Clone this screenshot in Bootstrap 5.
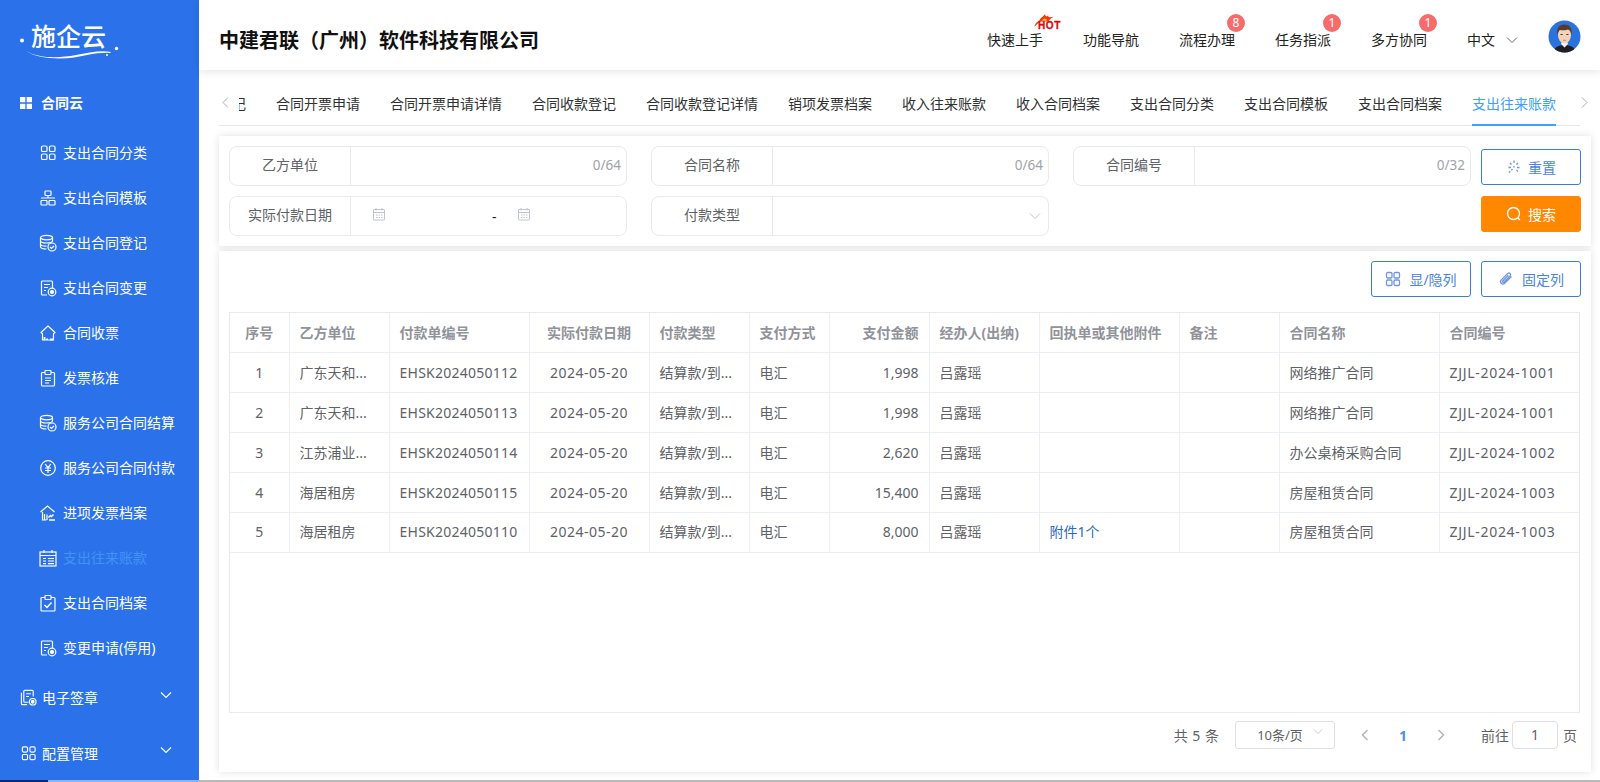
<!DOCTYPE html>
<html lang="zh-CN">
<head>
<meta charset="utf-8">
<title>支出往来账款</title>
<link href="https://cdn.jsdelivr.net/npm/bootstrap@5.3.0/dist/css/bootstrap.min.css" rel="stylesheet">
<style>
html,body{height:782px;overflow:hidden}
body{font-family:"Noto Sans","Noto Sans CJK SC",sans-serif;font-size:14px;color:#606266;background:#fff}
.app-shell{height:780px}
.side{width:199px;flex:none;background:#2b72ea;color:#fff}
.logo-box{height:80px;position:relative}
.logo-txt{position:absolute;left:31px;top:16px;font-size:25px;line-height:40px;font-weight:500;color:#fff}
.logo-art{position:absolute;left:0;top:0}
.side-head{height:45px;padding-left:20px;gap:9px;font-weight:700;color:#fff}
.side-list{margin-top:5px}
.side .nav-link{height:45px;padding:0 0 0 39px;gap:6px;color:#fff;display:flex;align-items:center;line-height:1}
.side .nav-link.is-on{color:#4193f5}
.side-group{height:56px;padding:0 27px 0 20px;gap:5px;color:#fff}
.side-group-first{height:55px}
.side-group .chev{margin-top:-6px}
.ico{width:18px;height:18px;flex:none;fill:none;stroke:#fff;stroke-width:1.2}
.ico-h{width:17px;height:17px}
.ico-sq{width:12px;height:12px}
.main-col{min-width:0}
.top-bar{height:70px;padding:0 19px 0 20px;box-shadow:0 2px 8px rgba(0,0,0,.1);position:relative;z-index:2}
.co-name{font-size:20px;font-weight:700;color:#111;line-height:1;margin-top:11px}
.top-item{position:relative;color:#222;line-height:1;margin-top:10px;margin-right:40px}
.top-item-last{margin-right:0}
.top-badge{position:absolute;left:48px;top:-19px;width:18px;height:18px;line-height:18px;text-align:center;border-radius:50%;background:#f56c6c;color:#fff;font-size:12px}
.hot-wrap{position:absolute;left:46px;top:-19px;width:26px;height:18px}
.hot-txt{position:absolute;left:5px;top:7px;font-size:10px;line-height:10px;font-weight:700;font-family:"Liberation Sans",sans-serif;color:#d80b0b;letter-spacing:.6px;-webkit-text-stroke:.3px #d80b0b}
.avatar-svg{width:33px;height:33px;margin-left:30px;margin-top:2px;flex:none}
.lang-chev{margin-left:11px;margin-top:10px}
.content-pad{padding:0 9px 0 20px}
.tab-row{height:56px;margin-right:11px;border-bottom:1px solid #e4e7ed;position:relative}
.tab-clip{position:absolute;left:20px;right:22px;top:0;bottom:-1px;overflow:hidden}
.tab-track{margin-left:-92px;white-space:nowrap;height:100%}
.tab-one{padding:0 15px;height:100%;color:#303133;line-height:1;padding-top:27px;flex:none}
.tab-one.is-on{color:#409eff;position:relative}
.tab-one.is-on::after{content:"";position:absolute;left:15px;right:15px;bottom:0;height:2px;background:#409eff}
.tab-arrow{position:absolute;top:27px}
.panel{box-shadow:0 0 8px rgba(0,0,0,.12);background:#fff}
.filter-panel{margin-top:10px;height:110px;padding:10px;gap:10px}
.filter-grid{display:grid;grid-template-columns:repeat(3,398px);grid-auto-rows:40px;column-gap:24px;row-gap:10px}
.fld{border:1px solid #e8eaed;border-radius:8px;background:#fff;height:40px}
.fld-lab{width:121px;flex:none;text-align:center;line-height:26px;height:38px;padding-top:5px;border-right:1px solid #e8eaed;margin-bottom:1px;color:#606266}
.fld-in{flex:1;min-width:0;border:0;outline:0;padding:0 6px;background:transparent;box-shadow:none}
.fld-count{font-size:13.5px;color:#a0a3a8;padding-right:5px;margin-top:-2px}
.date-box{padding-left:21px}
.date-ico{margin-top:-4px}
.date-dash{margin-left:106px;width:25px;color:#222}
.sel-box{padding-right:7px}
.btn-stack{width:100px;padding-top:3px;gap:11px}
.act-btn{height:36px;width:100px;padding:0;font-size:14px;border-radius:3px;border:1px solid #3a80d2;color:#4a86d8;background:#fff;gap:6px}
.act-btn:hover{color:#4a86d8;background:#fff;border-color:#3a80d2}
.act-wide{gap:8px}
.act-fill,.act-fill:hover{background:#ff8800;border-color:#ff8800;color:#fff}
.act-ico{width:16px;height:16px;fill:none;stroke:#6f96e0;stroke-width:1.3;flex:none}
.act-fill .act-ico{stroke:#fff}
.list-panel{margin-top:5px;height:521px;padding:10px 10px 0}
.tool-row{gap:10px}
.grid-wrap{margin-top:15px;height:401px;width:1351px;border:1px solid #e6e9ef}
.data-grid{table-layout:fixed;width:1349px;margin:0;--bs-table-border-color:#ebeef5;--bs-table-color:#606266;--bs-table-bg:#fff}
.data-grid th,.data-grid td{height:39.9px;padding:0 10px;vertical-align:middle;white-space:nowrap;overflow:hidden;font-size:14px;line-height:1}
.data-grid th{color:#909399;font-weight:700}
.data-grid tr>:first-child{border-left-width:0}
.data-grid tr>:last-child{border-right-width:0}
.data-grid thead tr{border-top-width:0}
.data-grid .t-bill{letter-spacing:.25px}
.data-grid .t-date{letter-spacing:.5px}
.data-grid .t-code{letter-spacing:.7px}
.file-link{color:#2c68c5;text-decoration:none}
.pager-row{height:44px;padding-right:4px;color:#606266}
.pg-total{word-spacing:1px}
.pg-size{width:100px;height:28px;border:1px solid #dcdfe6;border-radius:3px;margin-left:16px;position:relative;font-size:13px;text-align:center;line-height:26px;padding-right:10px}
.pg-size svg{position:absolute;right:11px;top:6px}
.pg-cur{color:#4a90e8;font-weight:700;width:16px;text-align:center;margin:0 26px}
.pg-prev{margin-left:26px}
.pg-next{margin-right:36px}
.pg-in{width:46px;height:28px;border:1px solid #dcdfe6;border-radius:4px;text-align:center;line-height:26px;margin:0 5px 0 3px}
.base-strip{height:2px;background:#b9b9b9}
.base-a{width:48px;background:#0b2a74}
.base-b{width:151px;background:#8db4f2}
</style>
</head>
<body>
<svg width="0" height="0" class="position-absolute">
<defs>
<symbol id="i-grid" viewBox="0 0 18 18"><rect x="2.500" y="2" width="5.500" height="5.500" rx="1.300"/><rect x="10.500" y="2" width="5.500" height="5.500" rx="1.300"/><rect x="2.500" y="10" width="5.500" height="5.500" rx="1.300"/><rect x="10.500" y="10" width="5.500" height="5.500" rx="1.300"/></symbol>
<symbol id="i-org" viewBox="0 0 18 18"><rect x="6" y="2" width="6" height="4.500" rx=".7"/><rect x="2" y="11.500" width="6" height="4.500" rx=".7"/><rect x="10" y="11.500" width="6" height="4.500" rx=".7"/><path d="M9 6.500V9M2 9h14"/></symbol>
<symbol id="i-db" viewBox="0 0 18 18"><ellipse cx="7.500" cy="3.600" rx="6" ry="2.200"/><path d="M1.500 3.600v9.200c0 1.200 2.700 2.200 6 2.200M1.500 6.800c0 1.200 2.700 2.200 6 2.200s6-1 6-2.200V3.600M1.500 10c0 1.200 2.700 2.200 6 2.200"/><circle cx="13" cy="13" r="4"/><path d="M11 13l1.500 1.500 2.500-2.500"/></symbol>
<symbol id="i-doc" viewBox="0 0 18 18"><path d="M8 16H3.500a1 1 0 0 1-1-1V3a1 1 0 0 1 1-1h9a1 1 0 0 1 1 1v6"/><path d="M5 5.500h6M5 8.500h4M5 11.500h2"/><circle cx="13" cy="13" r="3.800"/><circle cx="13" cy="13" r="1.500" fill="#fff"/></symbol>
<symbol id="i-doc2" viewBox="0 0 18 18"><path d="M1.500 4v11.500a1 1 0 0 0 1 1h5"/><path d="M9 14H5a1 1 0 0 1-1-1V2.500a1 1 0 0 1 1-1h8a1 1 0 0 1 1 1V8"/><path d="M6.500 5h5M6.500 8h3"/><circle cx="13.500" cy="13.500" r="3.500"/><circle cx="13.500" cy="13.500" r="1.400" fill="#fff"/></symbol>
<symbol id="i-house" viewBox="0 0 18 18"><path d="M2 8.500L9 2l7 6.500-1.500 1.200V16H3.500V9.700z" stroke-linejoin="round"/><path d="M5.500 16v-3M8 16v-1.500M11 15.500h3" stroke-width="1.800"/></symbol>
<symbol id="i-clip" viewBox="0 0 18 18"><path d="M6 3.500H3.500a1 1 0 0 0-1 1V16a1 1 0 0 0 1 1h11a1 1 0 0 0 1-1V4.500a1 1 0 0 0-1-1H12"/><rect x="6" y="1.500" width="6" height="4" rx=".8"/><path d="M6 9h6M6 11.500h6M6 14h4"/></symbol>
<symbol id="i-clipc" viewBox="0 0 18 18"><path d="M6 3.500H3a1 1 0 0 0-1 1V16a1 1 0 0 0 1 1h12a1 1 0 0 0 1-1V4.500a1 1 0 0 0-1-1h-3"/><rect x="6" y="1.500" width="6" height="4" rx=".8"/><path d="M5.500 11l2.500 2.500 4.500-5" stroke-width="1.500"/></symbol>
<symbol id="i-yen" viewBox="0 0 18 18"><circle cx="9" cy="9" r="7.300"/><path d="M6.200 5L9 8.700 11.800 5M6 9h6M6 11.500h6M9 8.700V14"/></symbol>
<symbol id="i-home2" viewBox="0 0 18 18"><path d="M1.500 8L8.500 2l7 6"/><path d="M3.500 8v8h4M5.500 10v6M8 10.500v5.500"/><path d="M9.500 13.500l2-2 1 1 2-2M10 16h6" stroke-width="1.500"/></symbol>
<symbol id="i-cal" viewBox="0 0 18 18"><rect x="1" y="3" width="16" height="14"/><path d="M5 1v3M13 1v3M1 6.500h16M4 9.500h3M9 9.500h6M4 12h3M9 12h6M4 14.700h3M9 14.700h6"/></symbol>
<symbol id="i-down" viewBox="0 0 12 8"><path d="M1 1.500l5 5 5-5" fill="none"/></symbol>
<symbol id="i-cald" viewBox="0 0 14 14"><rect x="1.500" y="2.500" width="11" height="10.500" rx=".5"/><path d="M4 1v2.500M10 1v2.500M1.500 5.500h11M4 8h1.500M6.500 8H8M9 8h1.500M4 10.500h1.500M6.500 10.500H8M9 10.500h1.500"/></symbol>
</defs>
</svg>

<div class="d-flex app-shell">
  <aside class="side">
    <div class="logo-box">
      <svg class="logo-art" width="130" height="70" viewBox="0 0 130 70" aria-hidden="true">
        <circle cx="22" cy="40.500" r="2" fill="#fff"/>
        <circle cx="116.500" cy="48.500" r="1.700" fill="#fff"/>
        <circle cx="107" cy="55" r="1" fill="#fff"/>
        <path d="M26 51c14 8 34 7 50 4 12-2 24-5 35-3l-1 1c-13-1-24 3-36 4.500-16 2-37 1-48-6.500z" fill="#fff"/>
      </svg>
      <div class="logo-txt">施企云</div>
    </div>
    <div class="side-head d-flex align-items-center">
      <svg class="ico ico-sq" viewBox="0 0 18 18"><path d="M0 0h8v8H0zM10 0h8v8h-8zM0 10h8v8H0zM10 10h8v8h-8z" fill="#fff" stroke="none"/></svg>
      <span>合同云</span>
    </div>
    <nav class="nav flex-column side-list">
      <a class="nav-link" href="#"><svg class="ico"><use href="#i-grid"/></svg>支出合同分类</a>
      <a class="nav-link" href="#"><svg class="ico"><use href="#i-org"/></svg>支出合同模板</a>
      <a class="nav-link" href="#"><svg class="ico"><use href="#i-db"/></svg>支出合同登记</a>
      <a class="nav-link" href="#"><svg class="ico"><use href="#i-doc"/></svg>支出合同变更</a>
      <a class="nav-link" href="#"><svg class="ico"><use href="#i-house"/></svg>合同收票</a>
      <a class="nav-link" href="#"><svg class="ico"><use href="#i-clip"/></svg>发票核准</a>
      <a class="nav-link" href="#"><svg class="ico"><use href="#i-db"/></svg>服务公司合同结算</a>
      <a class="nav-link" href="#"><svg class="ico"><use href="#i-yen"/></svg>服务公司合同付款</a>
      <a class="nav-link" href="#"><svg class="ico"><use href="#i-home2"/></svg>进项发票档案</a>
      <a class="nav-link is-on" href="#"><svg class="ico"><use href="#i-cal"/></svg>支出往来账款</a>
      <a class="nav-link" href="#"><svg class="ico"><use href="#i-clipc"/></svg>支出合同档案</a>
      <a class="nav-link" href="#"><svg class="ico"><use href="#i-doc"/></svg>变更申请(停用)</a>
    </nav>
    <div class="side-group side-group-first d-flex align-items-center">
      <svg class="ico ico-h"><use href="#i-doc2"/></svg>
      <span class="flex-grow-1">电子签章</span>
      <svg class="chev" width="12" height="8" stroke="#fff" stroke-width="1.100"><use href="#i-down"/></svg>
    </div>
    <div class="side-group d-flex align-items-center">
      <svg class="ico ico-h"><use href="#i-grid"/></svg>
      <span class="flex-grow-1">配置管理</span>
      <svg class="chev" width="12" height="8" stroke="#fff" stroke-width="1.100"><use href="#i-down"/></svg>
    </div>
  </aside>

  <div class="flex-grow-1 main-col">
    <header class="navbar bg-white top-bar flex-nowrap">
      <div class="co-name">中建君联（广州）软件科技有限公司</div>
      <div class="d-flex align-items-center">
        <div class="top-item">快速上手
          <div class="hot-wrap">
            <svg width="22" height="15" viewBox="0 0 20 14" class="position-absolute top-0 start-0"><path d="M1 12C2 8 4 7 6 6 6 4 9 3 11 0c0 2 1 3 3 1.500-.5 2 2 1.500 5 1-2.500 1-4 3-5 4.500H7c-2 1-4 3-6 5z" fill="#f2380c"/><path d="M8 6c1-1 2-2 3-2 0 1 1 1 2 1l-1 2z" fill="#ffb52e"/></svg>
            <span class="hot-txt">HOT</span>
          </div>
        </div>
        <div class="top-item">功能导航</div>
        <div class="top-item">流程办理<span class="top-badge">8</span></div>
        <div class="top-item">任务指派<span class="top-badge">1</span></div>
        <div class="top-item">多方协同<span class="top-badge">1</span></div>
        <div class="top-item top-item-last">中文</div>
        <svg class="lang-chev" width="12" height="8" stroke="#666" stroke-width="1"><use href="#i-down"/></svg>
        <svg class="avatar-svg" viewBox="0 0 33 33" aria-label="头像">
          <defs><clipPath id="av"><circle cx="16.500" cy="16.500" r="16"/></clipPath></defs>
          <circle cx="16.500" cy="16.500" r="16" fill="#2a72dc"/>
          <g clip-path="url(#av)">
            <path d="M5 33c1-6 6-8 11.500-8S27 27 28 33z" fill="#1f1f22"/>
            <path d="M13 24l3.500 3.500L20 24l-1-3h-5z" fill="#f3f3f3"/>
            <ellipse cx="16.500" cy="15" rx="6.500" ry="8.500" fill="#f4d2b8"/>
            <path d="M9.500 15c-1.500-6 1-10.500 7-10.500 5.500 0 8 4 7 10.500-.5-3-1.500-5-3.500-5.500-3 1-6 1-8 .5-1.500 1-2 2.500-2.500 5z" fill="#5b3a2e"/>
            <path d="M12.500 14.500h2.200M18.300 14.500h2.200" stroke="#3a2a22" stroke-width=".9"/>
            <path d="M15 20.300h3" stroke="#c4765f" stroke-width=".8"/>
          </g>
        </svg>
      </div>
    </header>

    <div class="content-pad">
      <div class="tab-row">
        <svg class="tab-arrow" style="left:3px" width="7" height="11" viewBox="0 0 7 11" fill="none" stroke="#a8abb2" stroke-width="1"><path d="M6 .5l-5 5 5 5"/></svg>
        <div class="tab-clip">
          <div class="d-flex tab-track">
            <div class="tab-one">合同付款登记</div>
            <div class="tab-one">合同开票申请</div>
            <div class="tab-one">合同开票申请详情</div>
            <div class="tab-one">合同收款登记</div>
            <div class="tab-one">合同收款登记详情</div>
            <div class="tab-one">销项发票档案</div>
            <div class="tab-one">收入往来账款</div>
            <div class="tab-one">收入合同档案</div>
            <div class="tab-one">支出合同分类</div>
            <div class="tab-one">支出合同模板</div>
            <div class="tab-one">支出合同档案</div>
            <div class="tab-one is-on">支出往来账款</div>
          </div>
        </div>
        <svg class="tab-arrow" style="right:-8px" width="7" height="11" viewBox="0 0 7 11" fill="none" stroke="#a8abb2" stroke-width="1"><path d="M1 .5l5 5-5 5"/></svg>
      </div>

      <section class="panel filter-panel d-flex">
        <div class="filter-grid">
          <div class="fld d-flex align-items-center"><div class="fld-lab">乙方单位</div><input class="fld-in" type="text" aria-label="乙方单位"><span class="fld-count">0/64</span></div>
          <div class="fld d-flex align-items-center"><div class="fld-lab">合同名称</div><input class="fld-in" type="text" aria-label="合同名称"><span class="fld-count">0/64</span></div>
          <div class="fld d-flex align-items-center"><div class="fld-lab">合同编号</div><input class="fld-in" type="text" aria-label="合同编号"><span class="fld-count">0/32</span></div>
          <div class="fld d-flex align-items-center">
            <div class="fld-lab">实际付款日期</div>
            <div class="flex-grow-1 d-flex align-items-center date-box">
              <svg class="date-ico" width="14" height="14" fill="none" stroke="#c0c4cc" stroke-width="1"><use href="#i-cald"/></svg>
              <span class="date-dash">-</span>
              <svg class="date-ico" width="14" height="14" fill="none" stroke="#c0c4cc" stroke-width="1"><use href="#i-cald"/></svg>
            </div>
          </div>
          <div class="fld d-flex align-items-center">
            <div class="fld-lab">付款类型</div>
            <div class="flex-grow-1 d-flex justify-content-end align-items-center sel-box">
              <svg width="12" height="8" stroke="#c0c4cc" stroke-width="1"><use href="#i-down"/></svg>
            </div>
          </div>
        </div>
        <div class="btn-stack d-flex flex-column">
          <button type="button" class="btn act-btn d-flex align-items-center justify-content-center">
            <svg class="act-ico" viewBox="0 0 16 16"><path d="M8 1.500v2.500M8 7v1.500M2.500 8.500H5M11 8.500h2.500M4 4l1.500 1.500M12 4l-1.500 1.500M10.500 11l1.500 1.500M6.500 10l-1.200 1.200M4.300 12.200L3 13.500" stroke-width="1.400"/></svg>
            <span>重置</span>
          </button>
          <button type="button" class="btn act-btn act-fill d-flex align-items-center justify-content-center">
            <svg class="act-ico" viewBox="0 0 16 16"><circle cx="7.500" cy="7.500" r="6"/><path d="M11.800 11.800l2.200 2.200"/></svg>
            <span>搜索</span>
          </button>
        </div>
      </section>

      <section class="panel list-panel">
        <div class="d-flex justify-content-end tool-row">
          <button type="button" class="btn act-btn act-wide d-flex align-items-center justify-content-center">
            <svg class="act-ico" viewBox="0 0 16 16"><rect x="1.500" y="1.500" width="5.500" height="5.500" rx="1.200"/><rect x="9" y="1.500" width="5.500" height="5.500" rx="1.200"/><rect x="1.500" y="9" width="5.500" height="5.500" rx="1.200"/><rect x="9" y="9" width="5.500" height="5.500" rx="1.200"/></svg>
            <span>显/隐列</span>
          </button>
          <button type="button" class="btn act-btn act-wide d-flex align-items-center justify-content-center">
            <svg class="act-ico" viewBox="0 0 16 16"><path d="M13.500 5.500l-6.800 6.800a2.400 2.400 0 0 1-3.400-3.400l6.500-6.500a1.700 1.700 0 0 1 2.400 2.400L6 11a.8.8 0 0 1-1.200-1.200l5.500-5.500"/></svg>
            <span>固定列</span>
          </button>
        </div>
        <div class="grid-wrap">
          <table class="table table-bordered data-grid">
            <colgroup>
              <col style="width:59px"><col style="width:100px"><col style="width:140px"><col style="width:120px"><col style="width:100px"><col style="width:80px"><col style="width:100px"><col style="width:110px"><col style="width:140px"><col style="width:100px"><col style="width:160px"><col style="width:140px">
            </colgroup>
            <thead>
              <tr><th class="text-center">序号</th><th>乙方单位</th><th>付款单编号</th><th class="text-center">实际付款日期</th><th>付款类型</th><th>支付方式</th><th class="text-end">支付金额</th><th>经办人(出纳)</th><th>回执单或其他附件</th><th>备注</th><th>合同名称</th><th>合同编号</th></tr>
            </thead>
            <tbody>
              <tr><td class="text-center">1</td><td>广东天和...</td><td class="t-bill">EHSK2024050112</td><td class="text-center t-date">2024-05-20</td><td>结算款/到...</td><td>电汇</td><td class="text-end">1,998</td><td>吕露瑶</td><td></td><td></td><td>网络推广合同</td><td class="t-code">ZJJL-2024-1001</td></tr>
              <tr><td class="text-center">2</td><td>广东天和...</td><td class="t-bill">EHSK2024050113</td><td class="text-center t-date">2024-05-20</td><td>结算款/到...</td><td>电汇</td><td class="text-end">1,998</td><td>吕露瑶</td><td></td><td></td><td>网络推广合同</td><td class="t-code">ZJJL-2024-1001</td></tr>
              <tr><td class="text-center">3</td><td>江苏浦业...</td><td class="t-bill">EHSK2024050114</td><td class="text-center t-date">2024-05-20</td><td>结算款/到...</td><td>电汇</td><td class="text-end">2,620</td><td>吕露瑶</td><td></td><td></td><td>办公桌椅采购合同</td><td class="t-code">ZJJL-2024-1002</td></tr>
              <tr><td class="text-center">4</td><td>海居租房</td><td class="t-bill">EHSK2024050115</td><td class="text-center t-date">2024-05-20</td><td>结算款/到...</td><td>电汇</td><td class="text-end">15,400</td><td>吕露瑶</td><td></td><td></td><td>房屋租赁合同</td><td class="t-code">ZJJL-2024-1003</td></tr>
              <tr><td class="text-center">5</td><td>海居租房</td><td class="t-bill">EHSK2024050110</td><td class="text-center t-date">2024-05-20</td><td>结算款/到...</td><td>电汇</td><td class="text-end">8,000</td><td>吕露瑶</td><td><a class="file-link" href="#">附件1个</a></td><td></td><td>房屋租赁合同</td><td class="t-code">ZJJL-2024-1003</td></tr>
            </tbody>
          </table>
        </div>
        <div class="d-flex justify-content-end align-items-center pager-row">
          <span class="pg-total">共 5 条</span>
          <div class="pg-size">10条/页<svg width="10" height="7" stroke="#c0c4cc" stroke-width="1"><use href="#i-down"/></svg></div>
          <svg class="pg-prev" width="8" height="12" viewBox="0 0 8 12" fill="none" stroke="#b4b8c0" stroke-width="1.600"><path d="M6.500 1l-5 5 5 5"/></svg>
          <span class="pg-cur">1</span>
          <svg class="pg-next" width="8" height="12" viewBox="0 0 8 12" fill="none" stroke="#b4b8c0" stroke-width="1.600"><path d="M1.500 1l5 5-5 5"/></svg>
          <span>前往</span>
          <div class="pg-in">1</div>
          <span>页</span>
        </div>
      </section>
    </div>
  </div>
</div>
<div class="d-flex base-strip"><div class="base-a"></div><div class="base-b"></div></div>
<script src="https://cdn.jsdelivr.net/npm/bootstrap@5.3.0/dist/js/bootstrap.bundle.min.js"></script>
</body>
</html>
